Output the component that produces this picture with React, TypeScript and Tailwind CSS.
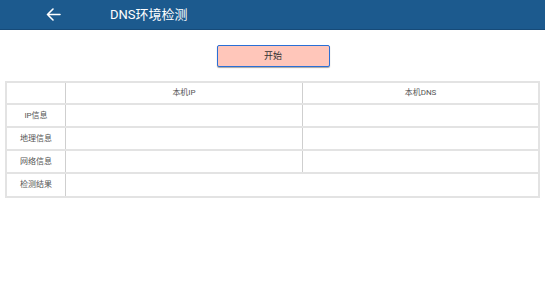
import React from 'react';

const rows = ['IP信息', '地理信息', '网络信息'];

export default function App() {
  return (
    <div className="w-[545px] h-[307px] bg-white overflow-hidden" style={{ fontFamily: 'Roboto, "Noto Sans CJK SC", sans-serif' }}>
      {/* Top bar */}
      <div className="h-[30px] bg-[#1c5a8e] border-b border-[#164a78] flex items-center">
        <div className="w-[110px] pl-[46px] flex items-center">
          <svg width="15" height="13" viewBox="0 0 15 13" fill="none" stroke="white" strokeWidth="1.6" strokeLinecap="round" strokeLinejoin="round">
            <path d="M14 6.5H1.5M7 1L1.5 6.5L7 12" />
          </svg>
        </div>
        <span className="text-[13px] text-white leading-none">DNS环境检测</span>
      </div>

      {/* Start button */}
      <div className="flex justify-center pt-[15px] pl-[1px]">
        <button className="w-[113px] h-[22px] bg-[#ffc6ba] border-[1.5px] border-[#2a6fd6] rounded-[2px] shadow-[0_1px_1px_rgba(0,0,0,0.35)] text-[9px] text-[#333] leading-none">
          开始
        </button>
      </div>

      {/* Table */}
      <div className="mx-[5px] mt-[14px] border-2 border-[#e3e3e3] text-[8px] text-[#555]">
        <div className="flex h-[22px] border-b-2 border-[#e3e3e3]">
          <div className="w-[59px] border-r border-[#cfcfcf]" />
          <div className="w-[237px] border-r border-[#cfcfcf] flex items-center justify-center">本机IP</div>
          <div className="flex-1 flex items-center justify-center">本机DNS</div>
        </div>
        {rows.map((r) => (
          <div key={r} className="flex h-[23px] border-b-2 border-[#e3e3e3]">
            <div className="w-[59px] border-r border-[#cfcfcf] flex items-center justify-center">{r}</div>
            <div className="w-[237px] border-r border-[#cfcfcf]" />
            <div className="flex-1" />
          </div>
        ))}
        <div className="flex h-[22px]">
          <div className="w-[59px] border-r border-[#cfcfcf] flex items-center justify-center">检测结果</div>
          <div className="flex-1" />
        </div>
      </div>
    </div>
  );
}
